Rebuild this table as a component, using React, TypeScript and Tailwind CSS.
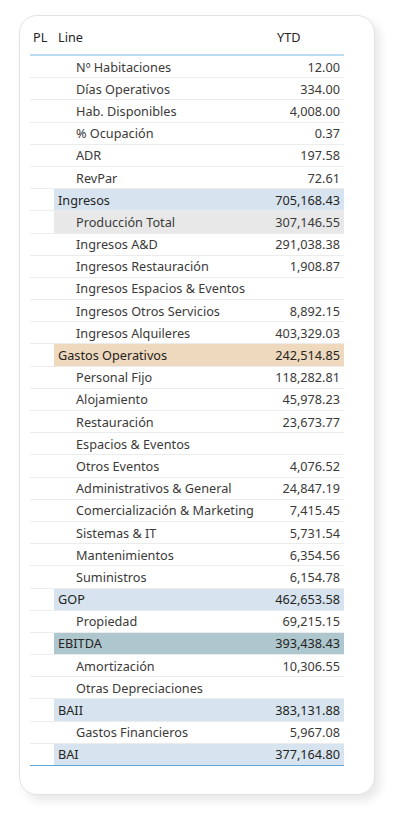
type Row = {
  label: string;
  value: string;
  kind?: "blue" | "gray" | "tan" | "teal";
};

const rows: Row[] = [
  { label: "Nº Habitaciones", value: "12.00" },
  { label: "Días Operativos", value: "334.00" },
  { label: "Hab. Disponibles", value: "4,008.00" },
  { label: "% Ocupación", value: "0.37" },
  { label: "ADR", value: "197.58" },
  { label: "RevPar", value: "72.61" },
  { label: "Ingresos", value: "705,168.43", kind: "blue" },
  { label: "Producción Total", value: "307,146.55", kind: "gray" },
  { label: "Ingresos A&D", value: "291,038.38" },
  { label: "Ingresos Restauración", value: "1,908.87" },
  { label: "Ingresos Espacios & Eventos", value: "" },
  { label: "Ingresos Otros Servicios", value: "8,892.15" },
  { label: "Ingresos Alquileres", value: "403,329.03" },
  { label: "Gastos Operativos", value: "242,514.85", kind: "tan" },
  { label: "Personal Fijo", value: "118,282.81" },
  { label: "Alojamiento", value: "45,978.23" },
  { label: "Restauración", value: "23,673.77" },
  { label: "Espacios & Eventos", value: "" },
  { label: "Otros Eventos", value: "4,076.52" },
  { label: "Administrativos & General", value: "24,847.19" },
  { label: "Comercialización & Marketing", value: "7,415.45" },
  { label: "Sistemas & IT", value: "5,731.54" },
  { label: "Mantenimientos", value: "6,354.56" },
  { label: "Suministros", value: "6,154.78" },
  { label: "GOP", value: "462,653.58", kind: "blue" },
  { label: "Propiedad", value: "69,215.15" },
  { label: "EBITDA", value: "393,438.43", kind: "teal" },
  { label: "Amortización", value: "10,306.55" },
  { label: "Otras Depreciaciones", value: "" },
  { label: "BAII", value: "383,131.88", kind: "blue" },
  { label: "Gastos Financieros", value: "5,967.08" },
  { label: "BAI", value: "377,164.80", kind: "blue" },
];

const bgFor = (kind?: Row["kind"]) => {
  if (kind === "blue") return "bg-[#d7e4ef] text-[#252423] pl-[4px]";
  if (kind === "gray") return "bg-[#e8e8e8] text-[#3b3a39] pl-[22px]";
  if (kind === "tan") return "bg-[#eed9be] text-[#252423] pl-[4px]";
  if (kind === "teal") return "bg-[#aec6cd] text-[#252423] pl-[4px]";
  return "bg-white text-[#3b3a39] pl-[22px]";
};

const App = () => {
  return (
    <div
      className="w-[402px] h-[817px] bg-white pt-[15px] pl-[19px]"
      style={{ fontFamily: '"Noto Sans", "Open Sans", sans-serif' }}
    >
      <div className="w-[356px] h-[780px] rounded-[18px] border border-[#e2e2e2] bg-white shadow-[5px_6px_10px_rgba(0,0,0,0.09)] pl-[10px]">
        <div className="w-[314px] h-[40px] flex items-start pt-[12px] border-b-2 border-[#bcdcf3] text-[12.7px] leading-[18px] text-[#252423]">
          <div className="w-[24px] pl-[3px]">PL</div>
          <div className="flex-1 pl-[4px]">Line</div>
          <div className="w-[72px] pl-[5px]">YTD</div>
        </div>
        <div className="w-[314px]">
          {rows.map((r, i) => (
            <div
              key={i}
              className={`h-[22.2px] flex border-b ${
                i === rows.length - 1 ? "border-[#5ea6d8]" : "border-[#ececec]"
              }`}
            >
              <div className="w-[24px] bg-white" />
              <div
                className={`flex-1 flex items-center text-[12.7px] leading-[21px] pt-[1px] whitespace-nowrap ${bgFor(
                  r.kind
                )}`}
              >
                <div className="flex-1">{r.label}</div>
                <div className="w-[80px] text-right pr-[4px]">{r.value}</div>
              </div>
            </div>
          ))}
        </div>
      </div>
    </div>
  );
};

export default App;
